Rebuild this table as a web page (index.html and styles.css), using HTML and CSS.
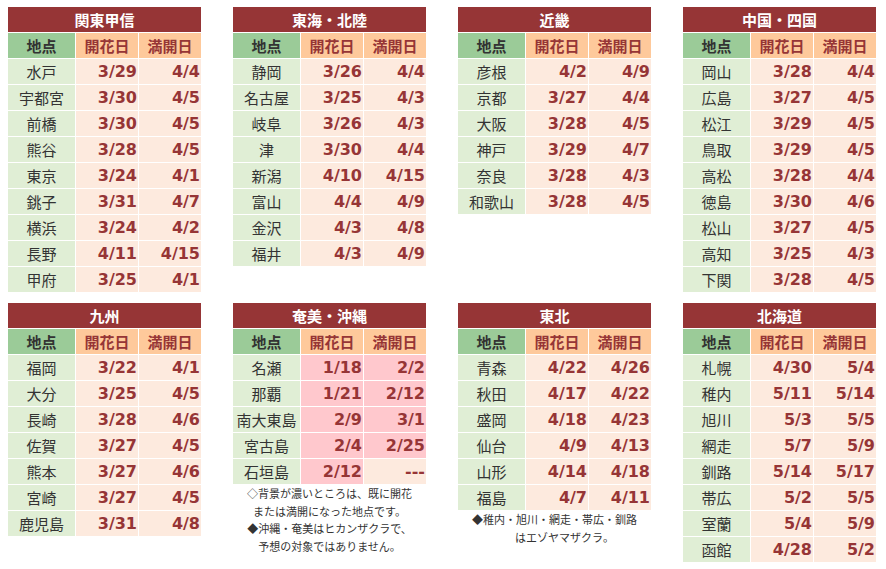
FILE: index.html
```html
<!DOCTYPE html>
<html lang="ja">
<head>
<meta charset="utf-8">
<link rel="stylesheet" href="styles.css">
</head>
<body>
<div class="page">
  <div class="block">
    <div class="tbl">
      <div class="title">関東甲信</div>
      <div class="h1">地点</div><div class="h2">開花日</div><div class="h2">満開日</div>
      <div class="pl">水戸</div><div class="d">3/29</div><div class="d">4/4</div>
      <div class="pl">宇都宮</div><div class="d">3/30</div><div class="d">4/5</div>
      <div class="pl">前橋</div><div class="d">3/30</div><div class="d">4/5</div>
      <div class="pl">熊谷</div><div class="d">3/28</div><div class="d">4/5</div>
      <div class="pl">東京</div><div class="d">3/24</div><div class="d">4/1</div>
      <div class="pl">銚子</div><div class="d">3/31</div><div class="d">4/7</div>
      <div class="pl">横浜</div><div class="d">3/24</div><div class="d">4/2</div>
      <div class="pl">長野</div><div class="d">4/11</div><div class="d">4/15</div>
      <div class="pl">甲府</div><div class="d">3/25</div><div class="d">4/1</div>
    </div>
  </div>
  <div class="block">
    <div class="tbl">
      <div class="title">東海・北陸</div>
      <div class="h1">地点</div><div class="h2">開花日</div><div class="h2">満開日</div>
      <div class="pl">静岡</div><div class="d">3/26</div><div class="d">4/4</div>
      <div class="pl">名古屋</div><div class="d">3/25</div><div class="d">4/3</div>
      <div class="pl">岐阜</div><div class="d">3/26</div><div class="d">4/3</div>
      <div class="pl">津</div><div class="d">3/30</div><div class="d">4/4</div>
      <div class="pl">新潟</div><div class="d">4/10</div><div class="d">4/15</div>
      <div class="pl">富山</div><div class="d">4/4</div><div class="d">4/9</div>
      <div class="pl">金沢</div><div class="d">4/3</div><div class="d">4/8</div>
      <div class="pl">福井</div><div class="d">4/3</div><div class="d">4/9</div>
    </div>
  </div>
  <div class="block">
    <div class="tbl">
      <div class="title">近畿</div>
      <div class="h1">地点</div><div class="h2">開花日</div><div class="h2">満開日</div>
      <div class="pl">彦根</div><div class="d">4/2</div><div class="d">4/9</div>
      <div class="pl">京都</div><div class="d">3/27</div><div class="d">4/4</div>
      <div class="pl">大阪</div><div class="d">3/28</div><div class="d">4/5</div>
      <div class="pl">神戸</div><div class="d">3/29</div><div class="d">4/7</div>
      <div class="pl">奈良</div><div class="d">3/28</div><div class="d">4/3</div>
      <div class="pl">和歌山</div><div class="d">3/28</div><div class="d">4/5</div>
    </div>
  </div>
  <div class="block">
    <div class="tbl">
      <div class="title">中国・四国</div>
      <div class="h1">地点</div><div class="h2">開花日</div><div class="h2">満開日</div>
      <div class="pl">岡山</div><div class="d">3/28</div><div class="d">4/4</div>
      <div class="pl">広島</div><div class="d">3/27</div><div class="d">4/5</div>
      <div class="pl">松江</div><div class="d">3/29</div><div class="d">4/5</div>
      <div class="pl">鳥取</div><div class="d">3/29</div><div class="d">4/5</div>
      <div class="pl">高松</div><div class="d">3/28</div><div class="d">4/4</div>
      <div class="pl">徳島</div><div class="d">3/30</div><div class="d">4/6</div>
      <div class="pl">松山</div><div class="d">3/27</div><div class="d">4/5</div>
      <div class="pl">高知</div><div class="d">3/25</div><div class="d">4/3</div>
      <div class="pl">下関</div><div class="d">3/28</div><div class="d">4/5</div>
    </div>
  </div>

  <div class="block">
    <div class="tbl">
      <div class="title">九州</div>
      <div class="h1">地点</div><div class="h2">開花日</div><div class="h2">満開日</div>
      <div class="pl">福岡</div><div class="d">3/22</div><div class="d">4/1</div>
      <div class="pl">大分</div><div class="d">3/25</div><div class="d">4/5</div>
      <div class="pl">長崎</div><div class="d">3/28</div><div class="d">4/6</div>
      <div class="pl">佐賀</div><div class="d">3/27</div><div class="d">4/5</div>
      <div class="pl">熊本</div><div class="d">3/27</div><div class="d">4/6</div>
      <div class="pl">宮崎</div><div class="d">3/27</div><div class="d">4/5</div>
      <div class="pl">鹿児島</div><div class="d">3/31</div><div class="d">4/8</div>
    </div>
  </div>
  <div class="block">
    <div class="tbl">
      <div class="title">奄美・沖縄</div>
      <div class="h1">地点</div><div class="h2">開花日</div><div class="h2">満開日</div>
      <div class="pl">名瀬</div><div class="d hot">1/18</div><div class="d hot">2/2</div>
      <div class="pl">那覇</div><div class="d hot">1/21</div><div class="d hot">2/12</div>
      <div class="pl">南大東島</div><div class="d hot">2/9</div><div class="d hot">3/1</div>
      <div class="pl">宮古島</div><div class="d hot">2/4</div><div class="d hot">2/25</div>
      <div class="pl">石垣島</div><div class="d hot">2/12</div><div class="d">---</div>
    </div>
    <div class="note">
      <p>◇背景が濃いところは、既に開花</p>
      <p>または満開になった地点です。</p>
      <p>◆沖縄・奄美はヒカンザクラで、</p>
      <p>予想の対象ではありません。</p>
    </div>
  </div>
  <div class="block">
    <div class="tbl">
      <div class="title">東北</div>
      <div class="h1">地点</div><div class="h2">開花日</div><div class="h2">満開日</div>
      <div class="pl">青森</div><div class="d">4/22</div><div class="d">4/26</div>
      <div class="pl">秋田</div><div class="d">4/17</div><div class="d">4/22</div>
      <div class="pl">盛岡</div><div class="d">4/18</div><div class="d">4/23</div>
      <div class="pl">仙台</div><div class="d">4/9</div><div class="d">4/13</div>
      <div class="pl">山形</div><div class="d">4/14</div><div class="d">4/18</div>
      <div class="pl">福島</div><div class="d">4/7</div><div class="d">4/11</div>
    </div>
    <div class="note">
      <p>◆稚内・旭川・網走・帯広・釧路</p>
      <p class="indent">はエゾヤマザクラ。</p>
    </div>
  </div>
  <div class="block">
    <div class="tbl">
      <div class="title">北海道</div>
      <div class="h1">地点</div><div class="h2">開花日</div><div class="h2">満開日</div>
      <div class="pl">札幌</div><div class="d">4/30</div><div class="d">5/4</div>
      <div class="pl">稚内</div><div class="d">5/11</div><div class="d">5/14</div>
      <div class="pl">旭川</div><div class="d">5/3</div><div class="d">5/5</div>
      <div class="pl">網走</div><div class="d">5/7</div><div class="d">5/9</div>
      <div class="pl">釧路</div><div class="d">5/14</div><div class="d">5/17</div>
      <div class="pl">帯広</div><div class="d">5/2</div><div class="d">5/5</div>
      <div class="pl">室蘭</div><div class="d">5/4</div><div class="d">5/9</div>
      <div class="pl">函館</div><div class="d">4/28</div><div class="d">5/2</div>
    </div>
  </div>
</div>
</body>
</html>
```
FILE: styles.css
```css
html, body {
  margin: 0;
  padding: 0;
  background: #ffffff;
}
body {
  font-family: "DejaVu Sans", "Noto Sans CJK JP", sans-serif;
}
.page {
  display: grid;
  grid-template-columns: repeat(4, 193px);
  column-gap: 32px;
  row-gap: 11px;
  align-items: start;
  padding: 7px 0 0 8px;
}
.tbl {
  display: grid;
  grid-template-columns: 67px 62px 62px;
  grid-auto-rows: 25px;
  gap: 1px;
  background: #ffffff;
}
.tbl > div {
  display: flex;
  align-items: center;
  line-height: 1;
}
.title {
  grid-column: 1 / 4;
  justify-content: center;
  background: #963536;
  color: #ffffff;
  font-family: "Noto Sans CJK JP", sans-serif;
  font-weight: bold;
  font-size: 15px;
}
.h1 {
  justify-content: center;
  background: #9bcb98;
  color: #333333;
  font-family: "Noto Sans CJK JP", sans-serif;
  font-weight: bold;
  font-size: 15px;
}
.h2 {
  justify-content: center;
  background: #fec99b;
  color: #963536;
  font-family: "Noto Sans CJK JP", sans-serif;
  font-weight: bold;
  font-size: 15px;
}
.pl {
  justify-content: center;
  background: #e0eed5;
  color: #333333;
  font-family: "Noto Sans CJK JP", sans-serif;
  font-size: 15px;
}
.d {
  justify-content: flex-end;
  padding-right: 1px;
  background: #fdeade;
  color: #963536;
  font-weight: bold;
  font-size: 16px;
}
.d.hot {
  background: #ffc8cd;
}
.note {
  margin-top: 1px;
  text-align: center;
  font-family: "Noto Sans CJK JP", sans-serif;
  font-size: 11px;
  color: #333333;
}
.note p {
  margin: 0;
  line-height: 17.5px;
}
.note .indent {
  padding-left: 20px;
}
```
